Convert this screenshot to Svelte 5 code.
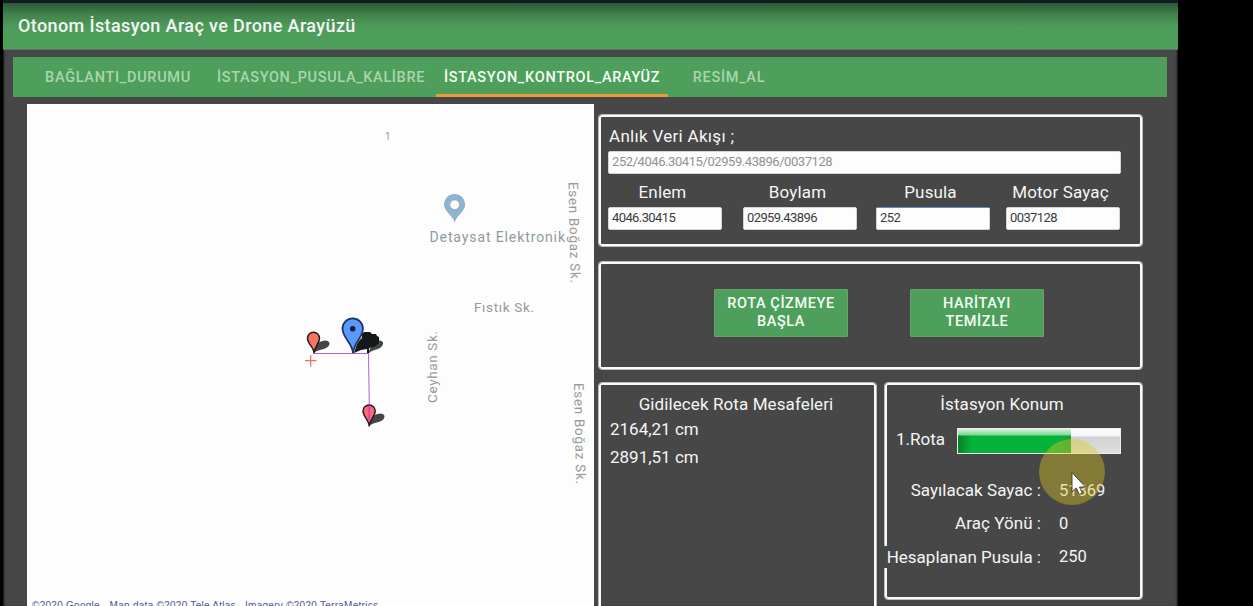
<script>
  const tabs = [
    { label: 'BAĞLANTI_DURUMU', width: 172 },
    { label: 'İSTASYON_PUSULA_KALİBRE', width: 234 },
    { label: 'İSTASYON_KONTROL_ARAYÜZ', width: 232, active: true },
    { label: 'RESİM_AL', width: 122 }
  ];
  const fields = [
    { label: 'Enlem', value: '4046.30415' },
    { label: 'Boylam', value: '02959.43896' },
    { label: 'Pusula', value: '252', focus: true },
    { label: 'Motor Sayaç', value: '0037128' }
  ];
  const distances = ['2164,21 cm', '2891,51 cm'];
  const stats = [
    { label: 'Sayılacak Sayac :', value: '51869' },
    { label: 'Araç Yönü :', value: '0' },
    { label: 'Hesaplanan Pusula :', value: '250', wide: true }
  ];
  const progress = 70;
</script>

<div class="screen">
  <div class="window">
    <header><h1>Otonom İstasyon Araç ve Drone Arayüzü</h1></header>
    <nav>
      {#each tabs as tab}
        <div class="tab" class:active={tab.active} style="width:{tab.width}px">{tab.label}</div>
      {/each}
    </nav>
    <main>
      <svg class="map" width="567" height="502" viewBox="27 104 567 502">
        <defs>
          <filter id="soft"><feGaussianBlur stdDeviation="0.7" /></filter>
        </defs>
        <rect x="27" y="104" width="567" height="502" fill="#fdfdfd" />
        <g class="street">
          <text x="385" y="140" class="tiny">1</text>
          <text x="429.500" y="242" textLength="135.500" class="place">Detaysat Elektronik</text>
          <text x="474" y="312" textLength="60">Fıstık Sk.</text>
          <text transform="translate(436.500 403) rotate(-90)" textLength="72">Ceyhan Sk.</text>
          <text transform="translate(568.500 182) rotate(88.800)" textLength="101">Esen Boğaz Sk.</text>
          <text transform="translate(574 383) rotate(88.800)" textLength="101">Esen Boğaz Sk.</text>
        </g>
        <path fill="#8fb4d0" fill-rule="evenodd" d="M454.700 223 C453.800 216 444 212 444 204.500 A10.600 10.600 0 0 1 465.200 204.500 C465.200 212 455.600 216 454.700 223 Z M454.700 200.200 a4.400 4.400 0 1 0 0.010 0 Z" />
        <g fill="#444" filter="url(#soft)">
          <path d="M314 353 C315 346 318 341 325 340.500 C331 340.500 331 346 325 348.500 C321 350 317 350 314 353 Z" />
          <path d="M369 353 C370 346 374 341 379 340.500 C385 340.500 384 346 379 348.500 C376 350 372 350 369 353 Z" />
          <path d="M369 426.500 C370 419 373 414 380 413.500 C386 413.500 386 419 380 421.500 C376 423 372 423 369 426.500 Z" />
        </g>
        <path fill="#151818" d="M354 353 C356 346 358 341 362 338 L362 334 L364 332 L370 332 L372 334 L376 334 L377 336 L379 337 L379 343 L377 345 L374 347 L369 348 L369.500 353 L367 353 L367 349 L361 350 Z" />
        <path d="M313.500 353.500 H368.500 L369.500 420" fill="none" stroke="#b560d0" stroke-width="1" />
        <path d="M314 353.300 C314 347 307.500 344 307.500 338.200 A6 6 0 0 1 319.500 338.200 C319.500 344 314 347 314 353.300 Z" fill="#f97563" stroke="#291b1c" stroke-width="1.500" />
        <path d="M369.200 426.500 C369.200 420 363 416.500 363 411 A6 6 0 0 1 375.200 411 C375.200 416.500 369.200 420 369.200 426.500 Z" fill="#fb6878" stroke="#291b1c" stroke-width="1.500" />
        <path d="M369.200 405 V420" stroke="#b936b0" stroke-width="1" />
        <path d="M353 353.300 C352.500 343 342.500 338 342.500 328.500 A10.200 10.200 0 0 1 362.900 328.500 C362.900 338 353.500 343 353 353.300 Z" fill="#5b98fa" stroke="#1a3669" stroke-width="1.800" />
        <circle cx="352.700" cy="328.700" r="2.800" fill="#102347" />
        <path d="M305 360.700 H316.500 M310.700 355 V366.500" stroke="#e57759" stroke-width="1.200" />
        <text x="32" y="609" class="credit" textLength="346">©2020 Google - Map data ©2020 Tele Atlas , Imagery ©2020 TerraMetrics</text>
      </svg>

      <div class="side">
        <section class="panel live">
          <h2>Anlık Veri Akışı ;</h2>
          <div class="input stream">252/4046.30415/02959.43896/0037128</div>
          <div class="fields">
            {#each fields as f}
              <label>
                <span>{f.label}</span>
                <div class="input" class:focus={f.focus}>{f.value}</div>
              </label>
            {/each}
          </div>
        </section>

        <section class="panel actions">
          <button>ROTA ÇİZMEYE<br />BAŞLA</button>
          <button>HARİTAYI<br />TEMİZLE</button>
        </section>

        <div class="bottom">
          <section class="panel route">
            <h3>Gidilecek Rota Mesafeleri</h3>
            {#each distances as d}<p>{d}</p>{/each}
          </section>
          <section class="panel station">
            <h3>İstasyon Konum</h3>
            <div class="progress-row">
              <span>1.Rota</span>
              <div class="bar"><div class="fill" style="width:{progress}%"></div></div>
            </div>
            {#each stats as s}
              <div class="stat" class:wide={s.wide}>
                <span class="name">{s.label}</span>
                <span class="value">{s.value}</span>
              </div>
            {/each}
            <svg class="pointer" width="66" height="66" viewBox="0 0 66 66">
              <circle cx="33" cy="33" r="33" fill="#dcc81e" fill-opacity="0.400" />
              <path d="M33 33.500 V53 L37.300 49 L40.300 55.500 L43.300 54 L40.500 48 H46.500 Z" fill="#fff" stroke="#333" stroke-width="0.900" />
            </svg>
          </section>
        </div>
      </div>
    </main>
  </div>
</div>

<style>
  :global(body) { background: #000; overflow: hidden; }
  * { box-sizing: border-box; }
  .screen {
    height: 606px;
    padding: 0 75px 0 3px;
    background: #000;
    overflow: hidden;
    font-family: Roboto, sans-serif;
    color: #f5f5f5;
  }
  .window {
    height: 606px;
    background: #464746;
    border-top: 3px solid #151b22;
    box-shadow: inset 2px 0 2px -1px #111, inset -2px 0 2px -1px #111;
  }
  header {
    height: 47px;
    padding: 0 15px;
    display: flex;
    align-items: center;
    background: linear-gradient(#2c5834 0, #43844d 12px, #4c9c5a 24px, #4e9f5c 100%);
    border-bottom: 1px solid #66706a;
  }
  h1 { margin: 0; padding-bottom: 2px; font-size: 18px; font-weight: 500; letter-spacing: 0.380px; white-space: nowrap; }
  nav {
    display: flex;
    width: 1154px;
    height: 40px;
    margin: 7px 0 7px 10px;
    padding-left: 19px;
    background: #4e9f5c;
  }
  .tab {
    height: 40px;
    padding-top: 3px;
    text-align: center;
    line-height: 35px;
    font-size: 14.500px;
    font-weight: 500;
    letter-spacing: 0.700px;
    color: #a9d6ad;
    white-space: nowrap;
  }
  .tab:nth-child(2) { margin-right: -2px; letter-spacing: 0.650px; }
  .active { color: #f4fff4; border-bottom: 3px solid #f19a38; }
  main { display: flex; gap: 4px; padding-left: 24px; }
  .map { display: block; flex: none; }
  .street text { font-family: Roboto, sans-serif; font-size: 13.500px; font-weight: 400; fill: #979a9b; }
  .street text.place { fill: #8f9ba3; font-size: 14px; }
  .street text.tiny { font-size: 10px; }
  .credit { font-family: "Liberation Sans", sans-serif; font-size: 10px; fill: #4d5798; }
  .side { width: 545px; padding-top: 10px; }
  .panel { border: 1px solid #bcbcbc; box-shadow: inset 0 0 0 2px #fafafa; border-radius: 4px; }
  .live { height: 133px; padding: 11px 8px 0 9px; }
  h2 { margin: 0 0 4px 1px; font-size: 17px; letter-spacing: 0.300px; line-height: 21px; font-weight: 400; }
  .input {
    height: 23px;
    width: 114px;
    padding-left: 3px;
    border: 1px solid #d4d4d4;
    border-radius: 2px;
    background: #fdfdfd;
    color: #3b3b3b;
    font: 13px/20px Roboto, sans-serif;
    letter-spacing: -0.600px;
  }
  .stream { width: 513px; color: #929292; letter-spacing: -0.430px; }
  .focus { border-top-color: #5b8fc4; }
  .fields { display: grid; grid-template-columns: 135px 133px 130px 114px; margin-top: 8px; }
  .fields span { display: block; width: 109px; height: 25px; text-align: center; font-size: 17px; letter-spacing: 0.150px; line-height: 21px; white-space: nowrap; }
  .actions { height: 109px; margin-top: 14px; padding: 27px 0 0 115px; display: flex; gap: 62px; }
  button {
    width: 134px;
    height: 48px;
    padding: 0;
    border: 1px solid #62a46b;
    border-radius: 1px;
    background: #4e9f5c;
    color: #f3fff3;
    font: 500 14.500px/18px Roboto, sans-serif;
    letter-spacing: 0.600px;
  }
  .bottom { display: flex; gap: 7px; margin-top: 12px; align-items: flex-start; }
  .route { width: 279px; height: 240px; padding: 10px 11px 0; }
  h3 { margin: 0; font-size: 17px; letter-spacing: 0.100px; line-height: 22px; font-weight: 400; text-align: center; white-space: nowrap; }
  p { margin: 3px 0 6px; font-size: 17px; line-height: 22px; }
  .route h3 { padding-right: 3px; }
  .station { position: relative; width: 259px; height: 218px; padding: 10px 2px 0; font-size: 17px; }
  .station h3 { padding-right: 23px; }
  .progress-row { display: flex; align-items: center; height: 27px; margin: 12px 0 20px 9px; }
  .progress-row span { width: 61px; margin-top: -3px; }
  .bar { width: 164px; height: 26px; border: 1px solid #eee; background: linear-gradient(#fff 0, #f4f4f4 7px, #d1d1d1 8px, #dedede 100%); }
  .fill { height: 24px; background: linear-gradient(#d8f4df 0, #78d891 6px, transparent 7px), linear-gradient(90deg, #087f2c 0, #05b33b 14px, #05b33b 88%, #189f3f 100%); }
  .stat { display: flex; height: 33px; line-height: 33px; white-space: nowrap; }
  .name { width: 154px; margin-right: 18px; text-align: right; letter-spacing: 0.050px; }
  .value { font-size: 16.500px; }
  .wide { position: relative; height: 22px; line-height: 22px; margin-left: -3px; margin-top: 6px; width: 230px; background: #464746; }
  .wide .name { width: 157px; letter-spacing: 0; }
  .pointer { position: absolute; left: 154px; top: 56px; }
</style>
